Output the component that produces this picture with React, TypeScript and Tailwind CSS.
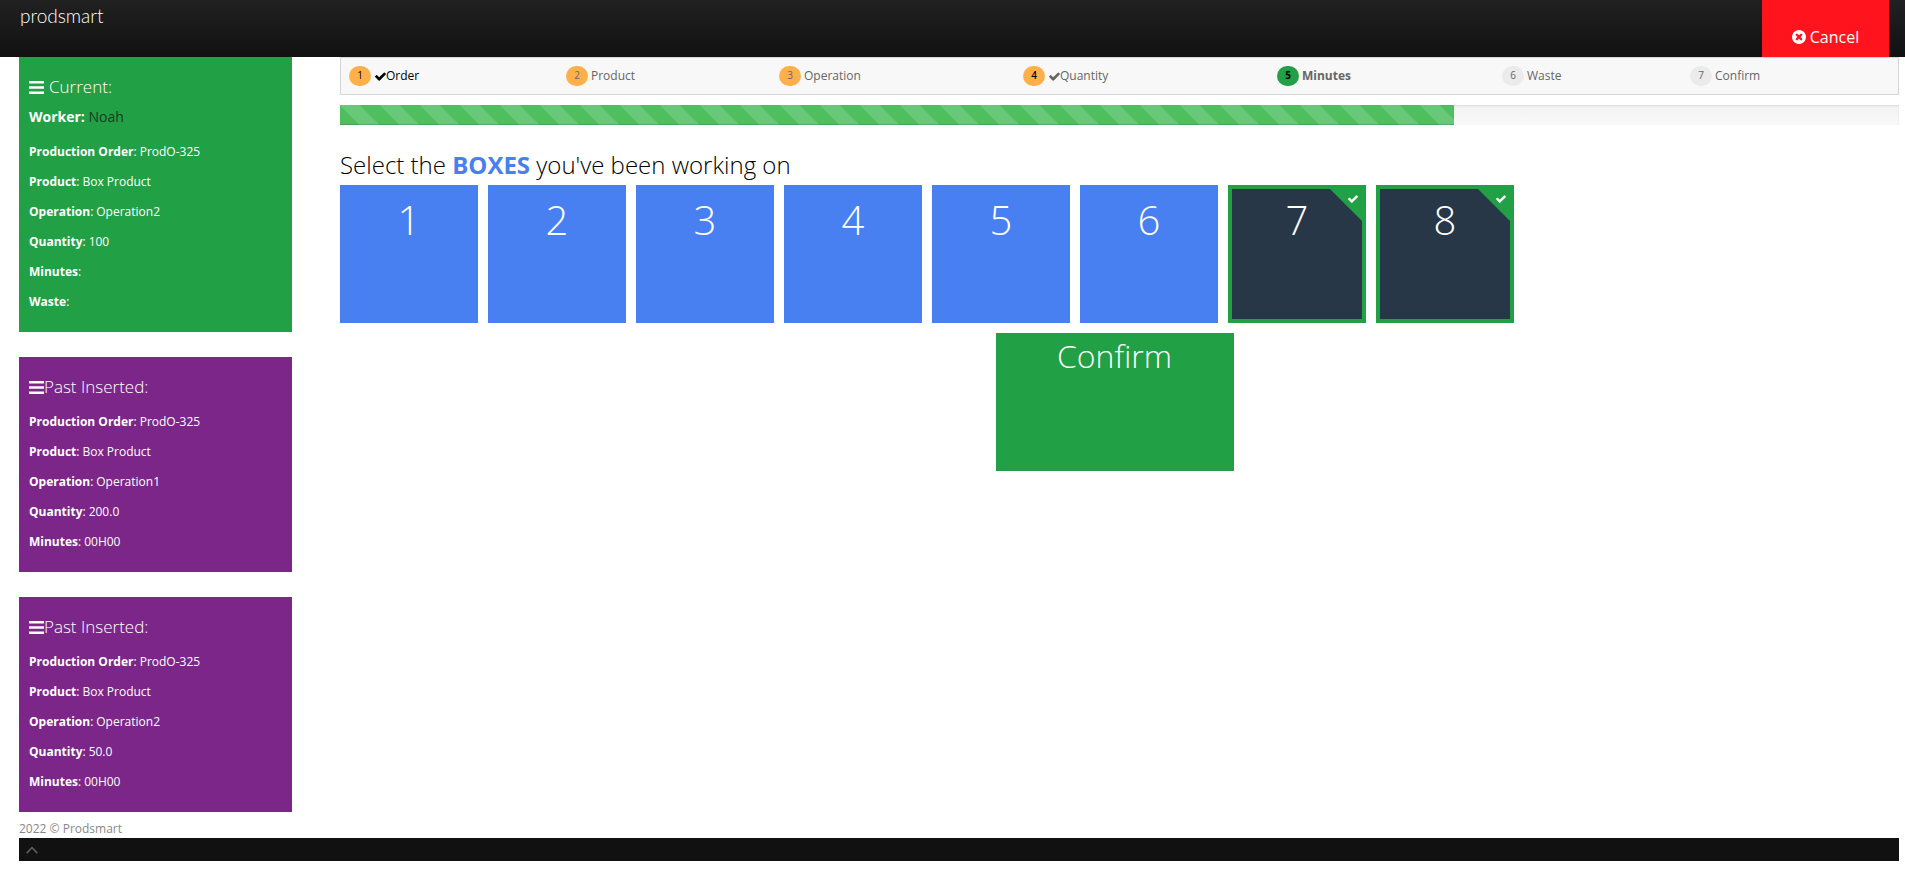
import { useState } from "react";

type Entry = { label: string; value: string };

const current: Entry[] = [
  { label: "Production Order", value: "ProdO-325" },
  { label: "Product", value: "Box Product" },
  { label: "Operation", value: "Operation2" },
  { label: "Quantity", value: "100" },
  { label: "Minutes", value: "" },
  { label: "Waste", value: "" },
];

const past: Entry[][] = [
  [
    { label: "Production Order", value: "ProdO-325" },
    { label: "Product", value: "Box Product" },
    { label: "Operation", value: "Operation1" },
    { label: "Quantity", value: "200.0" },
    { label: "Minutes", value: "00H00" },
  ],
  [
    { label: "Production Order", value: "ProdO-325" },
    { label: "Product", value: "Box Product" },
    { label: "Operation", value: "Operation2" },
    { label: "Quantity", value: "50.0" },
    { label: "Minutes", value: "00H00" },
  ],
];

const steps = [
  { name: "Order", check: true, badge: "bg-[#ffb04a]", text: "text-black", label: "text-black" },
  { name: "Product", check: false, badge: "bg-[#ffb04a]", text: "text-[#666]", label: "text-[#666]" },
  { name: "Operation", check: false, badge: "bg-[#ffb04a]", text: "text-[#666]", label: "text-[#666]" },
  { name: "Quantity", check: true, badge: "bg-[#ffb04a]", text: "text-black font-semibold", label: "text-[#666]" },
  { name: "Minutes", check: false, badge: "bg-[#21a045]", text: "text-black font-bold", label: "text-[#666] font-bold" },
  { name: "Waste", check: false, badge: "bg-[#ebebeb]", text: "text-[#666]", label: "text-[#666]" },
  { name: "Confirm", check: false, badge: "bg-[#ebebeb]", text: "text-[#666]", label: "text-[#666]" },
];

function Check({ className }: { className: string }) {
  return (
    <svg viewBox="120 290 1560 1240" className={className} fill="currentColor" aria-hidden="true">
      <path d="M1671 566q0 40-28 68l-724 724-136 136q-28 28-68 28t-68-28l-136-136-362-362q-28-28-28-68t28-68l136-136q28-28 68-28t68 28l294 295 656-657q28-28 68-28t68 28l136 136q28 28 28 68z" />
    </svg>
  );
}

function TimesCircle() {
  return (
    <svg viewBox="128 128 1536 1536" className="size-3.5" fill="currentColor" aria-hidden="true">
      <path d="M1277 1122q0-26-19-45l-181-181 181-181q19-19 19-45 0-27-19-46l-90-90q-19-19-46-19-26 0-45 19l-181 181-181-181q-19-19-45-19-27 0-46 19l-90 90q-19 19-19 46 0 26 19 45l181 181-181 181q-19 19-19 45 0 27 19 46l90 90q19 19 46 19 26 0 45-19l181-181 181 181q19 19 45 19 27 0 46-19l90-90q19-19 19-46zm387-226q0 209-103 385.500t-279.500 279.500-385.500 103-385.500-103-279.500-279.500-103-385.500 103-385.500 279.500-279.500 385.500-103 385.500 103 279.500 279.500 103 385.500z" />
    </svg>
  );
}

function Bars() {
  return (
    <svg viewBox="0 0 15 13" className="h-[13px] w-[15px]" fill="currentColor" aria-hidden="true">
      <path d="M0 0h15v2.600H0zM0 5.200h15v2.600H0zM0 10.400h15v2.600H0z" />
    </svg>
  );
}

function Details({ entries }: { entries: Entry[] }) {
  return (
    <dl className="text-xs leading-5">
      {entries.map((e) => (
        <div key={e.label} className="mb-2.5 flex gap-[3px]">
          <dt>
            <b>{e.label}</b>:
          </dt>
          <dd>{e.value}</dd>
        </div>
      ))}
    </dl>
  );
}

export default function App() {
  const [selected, setSelected] = useState<number[]>([7, 8]);
  const toggle = (n: number) =>
    setSelected((s) => (s.includes(n) ? s.filter((x) => x !== n) : [...s, n]));

  return (
    <div className="bg-white font-['Open_Sans','Liberation_Sans',sans-serif] text-black">
      <header className="flex h-[57px] items-start justify-between bg-linear-to-b from-[#212121] to-[#111] pr-4 pl-5">
        <a href="#" className="pt-1 font-['Lato',sans-serif] text-[19px] leading-6 font-light text-white">
          prodsmart
        </a>
        <button type="button" className="flex h-full w-[127px] items-center justify-center gap-1 bg-[#ff141e] pt-4 text-base text-white">
          <TimesCircle />
          Cancel
        </button>
      </header>

      <div className="flex gap-12 pr-1.5 pl-[19px]">
        <aside className="flex w-[273px] shrink-0 flex-col gap-[25px]">
          <section className="bg-[#21a045] px-2.5 pt-[19px] pb-2.5 text-white">
            <h2 className="flex items-center gap-[5px] text-[17px] leading-[22px] font-light">
              <Bars />
              Current:
            </h2>
            <p className="mt-[9px] mb-[15px] text-sm leading-5">
              <b>Worker:</b> <span className="text-[#1a3b22]">Noah</span>
            </p>
            <Details entries={current} />
          </section>
          {past.map((entries, i) => (
            <section key={i} className="bg-[#7d268a] px-2.5 pt-[19px] pb-2.5 text-white">
              <h2 className="mb-3.5 flex items-center text-[17px] leading-[22px] font-light">
                <Bars />
                Past Inserted:
              </h2>
              <Details entries={entries} />
            </section>
          ))}
        </aside>

        <main className="min-w-0 flex-1">
          <ol className="grid h-[38px] grid-cols-[217fr_213fr_244fr_254fr_225fr_188fr_216fr] items-center border border-[#d5d5d5] bg-[#f8f8f8] text-xs">
            {steps.map((s, i) => (
              <li key={s.name} className={`flex items-center gap-[3px] pl-2 ${s.label}`}>
                <span className={`flex h-5 w-[22px] items-center justify-center rounded-full text-[10px] ${s.badge} ${s.text}`}>
                  {i + 1}
                </span>
                <span className="flex items-center">
                  {s.check && <Check className="ml-px h-[9px] w-[11px]" />}
                  {s.name}
                </span>
              </li>
            ))}
          </ol>

          <div
            role="progressbar"
            aria-valuenow={5}
            aria-valuemax={7}
            aria-label="Progress"
            className="mt-2.5 h-5 bg-linear-to-b from-[#f2f2f2] to-[#f9f9f9] shadow-[inset_0_1px_2px_rgba(0,0,0,0.1)]"
          >
            <div
              className="h-full bg-[#4fbe5f] bg-[linear-gradient(45deg,rgba(255,255,255,0.15)_25%,transparent_25%,transparent_50%,rgba(255,255,255,0.15)_50%,rgba(255,255,255,0.15)_75%,transparent_75%,transparent)] bg-size-[40px_40px] shadow-[inset_0_-1px_0_rgba(0,0,0,0.15)]"
              style={{ width: `${(5 / 7) * 100}%` }}
            />
          </div>

          <h1 className="mt-[22px] mb-0.5 text-2xl leading-9 font-light">
            Select the <b className="font-bold text-[#4880f2]">BOXES</b> you've been working on
          </h1>

          <div className="flex flex-wrap gap-2.5">
            {[1, 2, 3, 4, 5, 6, 7, 8].map((n) => {
              const on = selected.includes(n);
              return (
                <button
                  key={n}
                  type="button"
                  aria-pressed={on}
                  onClick={() => toggle(n)}
                  className={`relative flex size-[138px] items-start justify-center border-4 pt-1 text-[40px] leading-[54px] font-light text-white ${
                    on ? "border-[#21a045] bg-[#283747]" : "border-[#4880f2] bg-[#4880f2]"
                  }`}
                >
                  {n}
                  {on && (
                    <span className="absolute top-0 right-0 size-8 bg-[#21a045] [clip-path:polygon(0_0,100%_0,100%_100%)]">
                      <Check className="absolute top-1.5 right-1 h-2 w-2.5" />
                    </span>
                  )}
                </button>
              );
            })}
          </div>

          <div className="mt-2.5 mr-2.5 flex justify-center">
            <button type="button" className="flex h-[138px] w-[238px] items-start justify-center bg-[#21a045] pt-[3px] text-[32px] leading-10 font-light text-white">
              Confirm
            </button>
          </div>
        </main>
      </div>

      <footer className="pt-[7px] pr-1.5 pb-2 pl-[19px]">
        <p className="text-xs leading-[19px] text-[#888]">2022 © Prodsmart</p>
        <div className="flex h-[23px] items-center bg-[#111] pl-[7px]">
          <a href="#" aria-label="Back to top" className="text-[#666]">
            <svg viewBox="0 0 12 8" className="h-2 w-3" fill="none" stroke="currentColor" strokeWidth="1.500" aria-hidden="true">
              <path d="M0.700 7.200 6 1.500l5.300 5.700" />
            </svg>
          </a>
        </div>
      </footer>
    </div>
  );
}
